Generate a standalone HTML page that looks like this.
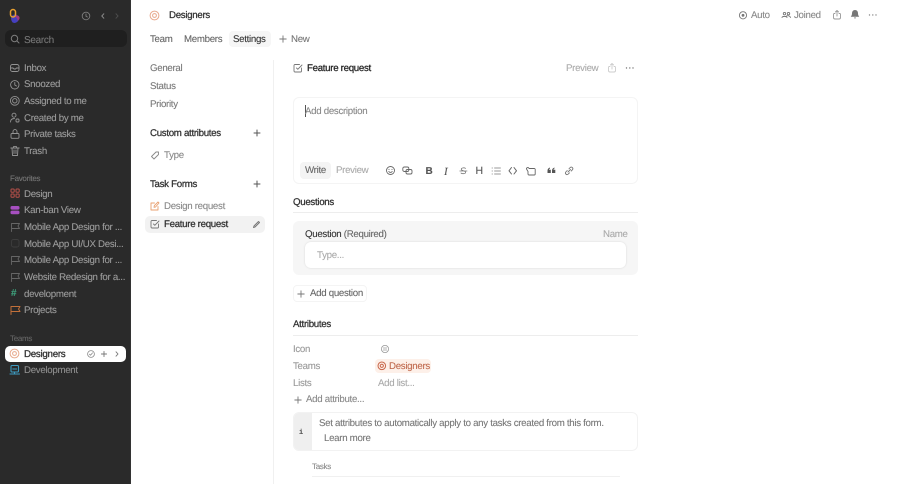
<!DOCTYPE html>
<html><head><meta charset="utf-8"><style>
*{box-sizing:border-box}
html,body{margin:0;padding:0;width:900px;height:484px;overflow:hidden;background:#fff;font-family:"Liberation Sans",sans-serif}
.t{position:absolute;white-space:nowrap;line-height:14px;font-size:9.7px;color:#777;margin-top:1px;letter-spacing:-.3px;text-rendering:geometricPrecision;-webkit-text-stroke:.1px}
.s{color:#aaa}
.d{color:#303030;-webkit-text-stroke:.25px}
.b{position:absolute}
svg{position:absolute;overflow:visible;fill:none;stroke-linecap:round;stroke-linejoin:round}
</style></head><body>
<div class="b" style="left:0;top:0;width:131px;height:484px;background:#2a2a2a;border-right:1px solid #333"></div>
<div class="b" style="left:5px;top:30px;width:122px;height:17px;border-radius:6px;background:#1f1f1f"></div>

<!-- logo -->
<svg style="left:8px;top:8px" width="14" height="16"><circle cx="7" cy="10.500" r="4" fill="#4a3fb0"/><circle cx="9" cy="10" r="2.600" fill="#a03a80"/><circle cx="6.500" cy="12" r="3" fill="#4540c0"/><rect x="2.500" y="1.500" width="5" height="7.500" rx="2.500" stroke="#e8a030" stroke-width="1.500"/></svg>
<!-- sidebar top icons -->
<svg style="left:81px;top:11px" width="10" height="10" stroke="#7c7c7c" stroke-width=".9"><circle cx="5" cy="5" r="3.800"/><path d="M5 3v2.200l1.400.8"/></svg>
<svg style="left:99px;top:12px" width="8" height="8" stroke="#8a8a8a" stroke-width="1"><path d="M4.800 1.800L2.800 4l2 2.200"/></svg>
<svg style="left:113px;top:12px" width="8" height="8" stroke="#4c4c4c" stroke-width="1"><path d="M3 1.800L5 4 3 6.200"/></svg>
<svg style="left:10px;top:34px" width="10" height="10" stroke="#7c7c7c" stroke-width="1"><circle cx="4.500" cy="4.500" r="3.200"/><path d="M7 7l2 2"/></svg>
<div class="t" style="left:24px;top:33px;color:#777;font-size:10px">Search</div>

<!-- nav icons -->
<svg style="left:9px;top:62px" width="12" height="12" stroke="#949494" stroke-width=".9"><rect x="1.500" y="2.500" width="8.500" height="7" rx="2"/><path d="M1.500 6h2.500l1 1h1.500l1-1h2.500"/></svg>
<svg style="left:9px;top:79px" width="12" height="12" stroke="#949494" stroke-width=".9"><circle cx="5.800" cy="5.800" r="4.200"/><path d="M5.800 3.400v2.600l1.700 1"/></svg>
<svg style="left:9px;top:95px" width="12" height="12" stroke="#949494" stroke-width=".9"><circle cx="5.800" cy="5.800" r="4.400"/><circle cx="5.800" cy="5.800" r="2.200"/></svg>
<svg style="left:9px;top:112px" width="12" height="12" stroke="#949494" stroke-width=".9"><circle cx="5" cy="3.200" r="2"/><path d="M1.500 10c0-2.500 1.500-3.500 4-3.500"/><rect x="7" y="7" width="3" height="3" rx="1"/></svg>
<svg style="left:9px;top:128px" width="12" height="12" stroke="#949494" stroke-width=".9"><rect x="2" y="5.500" width="8" height="4.800" rx="1"/><path d="M4 5.500V3.600a2 2 0 0 1 4 0v1.900"/></svg>
<svg style="left:9px;top:145px" width="12" height="12" stroke="#949494" stroke-width=".9"><path d="M1.800 3h8.400M4.500 3V1.600h3V3M3 3l.5 7.500h5L9 3M5 5v3.500M7 5v3.500"/></svg>

<div class="t" style="left:24px;top:60.500px;color:#9c9c9c">Inbox</div>
<div class="t" style="left:24px;top:77px;color:#9c9c9c">Snoozed</div>
<div class="t" style="left:24px;top:94px;color:#9c9c9c">Assigned to me</div>
<div class="t" style="left:24px;top:110.500px;color:#9c9c9c">Created by me</div>
<div class="t" style="left:24px;top:127px;color:#9c9c9c">Private tasks</div>
<div class="t" style="left:24px;top:144px;color:#9c9c9c">Trash</div>

<div class="t" style="left:10px;top:171px;font-size:8px;color:#777">Favorites</div>
<svg style="left:10px;top:188px" width="11" height="11" stroke="#b8504a" stroke-width="1"><rect x="1" y="1" width="3.200" height="3.200" rx=".8"/><rect x="6" y="1" width="3.200" height="3.200" rx=".8"/><rect x="1" y="6" width="3.200" height="3.200" rx=".8"/><rect x="6" y="6" width="3.200" height="3.200" rx=".8"/></svg>
<svg style="left:10px;top:205px" width="11" height="11"><rect x=".5" y="1" width="9" height="3.600" rx="1.600" fill="#a64fc0"/><rect x=".5" y="5.600" width="9" height="3.600" rx="1.600" fill="#a64fc0"/></svg>
<svg style="left:10px;top:222px" width="11" height="11" stroke="#666" stroke-width=".9"><path d="M1.500 9.500V1.500h8L8 4l1.500 2.500h-8"/></svg>
<svg style="left:10px;top:238px" width="11" height="11" stroke="#3d3d3d" stroke-width=".9"><rect x="1.500" y="1.500" width="7.500" height="7.500" rx="2"/></svg>
<svg style="left:10px;top:255px" width="11" height="11" stroke="#666" stroke-width=".9"><path d="M1.500 9.500V1.500h8L8 4l1.500 2.500h-8"/></svg>
<svg style="left:10px;top:272px" width="11" height="11" stroke="#666" stroke-width=".9"><path d="M1.500 9.500V1.500h8L8 4l1.500 2.500h-8"/></svg>
<div class="t" style="left:11px;top:286px;font-size:10px;font-weight:bold;color:#3fa07c">#</div>
<svg style="left:10px;top:305px" width="11" height="11" stroke="#c2703a" stroke-width="1"><path d="M1 9.500V1.500h9L8.500 4 10 6.500H1"/></svg>

<div class="t" style="left:24px;top:186.500px;color:#9c9c9c">Design</div>
<div class="t" style="left:24px;top:203px;color:#9c9c9c">Kan-ban View</div>
<div class="t" style="left:24px;top:220px;color:#9c9c9c">Mobile App Design for ...</div>
<div class="t" style="left:24px;top:236.500px;color:#9c9c9c">Mobile App UI/UX Desi...</div>
<div class="t" style="left:24px;top:253px;color:#9c9c9c">Mobile App Design for ...</div>
<div class="t" style="left:24px;top:270px;color:#9c9c9c">Website Redesign for a...</div>
<div class="t" style="left:24px;top:286.500px;color:#9c9c9c">development</div>
<div class="t" style="left:24px;top:303px;color:#9c9c9c">Projects</div>

<div class="t" style="left:10px;top:331px;font-size:8px;color:#666">Teams</div>
<div class="b" style="left:5px;top:346px;width:121px;height:16px;border-radius:5px;background:#fff"></div>
<svg style="left:9px;top:348px" width="12" height="12" stroke="#e8a98c" stroke-width="1"><circle cx="5.500" cy="5.500" r="4.400"/><circle cx="5.500" cy="5.500" r="1.900"/></svg>
<div class="t" style="left:24px;top:346.500px;color:#333;-webkit-text-stroke:.3px;font-size:9.800px;letter-spacing:-.3px">Designers</div>
<svg style="left:86px;top:349px" width="10" height="10" stroke="#888" stroke-width=".8"><circle cx="5" cy="5" r="3.400"/><path d="M3.500 5.200l1 1 2-2.300"/></svg>
<svg style="left:100px;top:350px" width="8" height="8" stroke="#777" stroke-width=".9"><path d="M4 1.400v5.200M1.400 4h5.200"/></svg>
<svg style="left:113px;top:350px" width="8" height="8" stroke="#777" stroke-width=".9"><path d="M3 1.800L5 4 3 6.200"/></svg>
<svg style="left:9px;top:364px" width="12" height="12" stroke="#3d9bc0" stroke-width="1.100"><rect x="2" y="1.500" width="7.500" height="6.500" rx="1"/><path d="M1 10h9.500M5.500 8v2M3.800 5h3.800"/></svg>
<div class="t" style="left:24px;top:363px;color:#8f8f8f">Development</div>

<!-- Header -->
<svg style="left:149px;top:10px" width="11" height="11" stroke="#e8a98c" stroke-width="1"><circle cx="5.500" cy="5.500" r="4.400"/><circle cx="5.500" cy="5.500" r="1.900"/></svg>
<div class="t d" style="left:169px;top:8px">Designers</div>
<div class="t" style="left:150px;top:32px;color:#666">Team</div>
<div class="t" style="left:184px;top:32px;color:#666">Members</div>
<div class="b" style="left:229px;top:31px;width:42px;height:16px;border-radius:4px;background:#f6f6f6"></div>
<div class="t" style="left:233px;top:32px;color:#333">Settings</div>
<svg style="left:279px;top:35px" width="8" height="8" stroke="#777" stroke-width=".9"><path d="M4 .8v6.400M.8 4h6.400"/></svg>
<div class="t" style="left:291px;top:32px;color:#777">New</div>

<svg style="left:738px;top:10px" width="10" height="10" stroke="#777" stroke-width=".9"><circle cx="5" cy="5.300" r="3.600"/><circle cx="5" cy="5.300" r="1" fill="#777"/></svg>
<div class="t" style="left:751px;top:8px;color:#888">Auto</div>
<svg style="left:781px;top:10px" width="11" height="10" stroke="#777" stroke-width=".9"><circle cx="3.500" cy="3.600" r="1.200"/><circle cx="7.500" cy="3.600" r="1.200"/><path d="M1 7.500c.3-1.500 4.700-1.500 5 0M5.500 6c1.200-.6 3.500-.3 4 1.500"/></svg>
<div class="t" style="left:794px;top:8px;color:#888">Joined</div>
<svg style="left:832px;top:9px" width="10" height="12" stroke="#999" stroke-width=".9"><path d="M3 4.500H2a1 1 0 0 0-.5 1v3a1.500 1.500 0 0 0 1.500 1.500h4a1.500 1.500 0 0 0 1.500-1.500v-3a1 1 0 0 0-.5-1H7M5 7V1.500M3.400 3L5 1.500 6.600 3"/></svg>
<svg style="left:850px;top:9px" width="10" height="11"><path d="M5 1c-2 0-3 1.500-3 3.500 0 1.800-.8 2.500-1.200 3.200h8.400C8.800 7 8 6.300 8 4.500 8 2.500 7 1 5 1zM4 8.500a1 1 0 0 0 2 0z" fill="#777"/></svg>
<svg style="left:868px;top:13px" width="10" height="4"><circle cx="1.500" cy="2" r=".7" fill="#888"/><circle cx="4.800" cy="2" r=".7" fill="#888"/><circle cx="8" cy="2" r=".7" fill="#888"/></svg>

<!-- secondary column -->
<div class="b" style="left:273px;top:60px;width:1px;height:424px;background:#f0f0f0"></div>
<div class="t" style="left:150px;top:61px;color:#777">General</div>
<div class="t" style="left:150px;top:79px;color:#777">Status</div>
<div class="t" style="left:150px;top:97px;color:#777">Priority</div>
<div class="t d" style="left:150px;top:126px">Custom attributes</div>
<svg style="left:253px;top:129px" width="8" height="8" stroke="#555" stroke-width="1"><path d="M4 1v6M1 4h6"/></svg>
<svg style="left:150px;top:150px" width="10" height="10" stroke="#888" stroke-width=".9"><path d="M1.500 6.500L6 2h2.500v2.500L4 9z"/></svg>
<div class="t" style="left:164px;top:148px;color:#888">Type</div>
<div class="t d" style="left:150px;top:177px">Task Forms</div>
<svg style="left:253px;top:180px" width="8" height="8" stroke="#555" stroke-width="1"><path d="M4 1v6M1 4h6"/></svg>
<svg style="left:150px;top:201px" width="10" height="10" stroke="#e8a070" stroke-width=".9"><path d="M8 5.500V9H1V2h3.500M4 6.300l.3-1.600L8 1l1 1-3.500 4z"/></svg>
<div class="t" style="left:164px;top:199px;color:#888">Design request</div>
<div class="b" style="left:145px;top:216px;width:120px;height:17px;border-radius:5px;background:#f2f2f2"></div>
<svg style="left:150px;top:219px" width="10" height="10" stroke="#777" stroke-width=".9"><path d="M8.500 5v3a1 1 0 0 1-1 1H2a1 1 0 0 1-1-1V2.500a1 1 0 0 1 1-1h4.500M3.500 5l1.300 1.300L9 2"/></svg>
<div class="t d" style="left:164px;top:217px">Feature request</div>
<svg style="left:252px;top:220px" width="9" height="9" stroke="#777" stroke-width="1"><path d="M1.500 7.500l.5-1.500L6.500 1.500l1 1L3 7z"/></svg>

<!-- main -->
<svg style="left:293px;top:63px" width="10" height="10" stroke="#777" stroke-width=".9"><path d="M8.500 5v3a1 1 0 0 1-1 1H2a1 1 0 0 1-1-1V2.500a1 1 0 0 1 1-1h4.500M3.500 5l1.300 1.300L9 2"/></svg>
<div class="t d" style="left:307px;top:60.500px;color:#222">Feature request</div>
<div class="t s" style="left:566px;top:60.500px">Preview</div>
<svg style="left:607px;top:62px" width="10" height="12" stroke="#ccc" stroke-width=".9"><path d="M3 4.500H2a1 1 0 0 0-.5 1v3a1.500 1.500 0 0 0 1.500 1.500h4a1.500 1.500 0 0 0 1.500-1.500v-3a1 1 0 0 0-.5-1H7M5 7V1.500M3.400 3L5 1.500 6.600 3"/></svg>
<svg style="left:625px;top:66px" width="10" height="4"><circle cx="1.500" cy="2" r=".7" fill="#777"/><circle cx="4.800" cy="2" r=".7" fill="#777"/><circle cx="8" cy="2" r=".7" fill="#777"/></svg>

<div class="b" style="left:293px;top:97px;width:345px;height:87px;border:1px solid #f4f4f4;border-radius:6px"></div>
<div class="b" style="left:305px;top:105px;width:1px;height:12px;background:#555"></div>
<div class="t" style="left:305px;top:104px;color:#888">Add description</div>
<div class="b" style="left:300px;top:162px;width:31px;height:17px;border-radius:4px;background:#f4f4f4"></div>
<div class="t" style="left:305px;top:163px;color:#666">Write</div>
<div class="t" style="left:336px;top:163px;color:#aaa">Preview</div>
<svg style="left:386px;top:166px" width="10" height="10" stroke="#666" stroke-width=".9"><circle cx="4.500" cy="4.500" r="4"/><path d="M2.800 5.500c.8 1.200 2.600 1.200 3.400 0M3 3.300v.3M6 3.300v.3"/></svg>
<svg style="left:402px;top:166px" width="11" height="10" stroke="#666" stroke-width=".9"><rect x=".8" y="1" width="6" height="4.500" rx="1.500"/><rect x="4" y="3.500" width="6" height="4.500" rx="1.500"/></svg>
<div class="t" style="left:425.500px;top:164px;font-weight:bold;color:#555;font-size:10px">B</div>
<div class="t" style="left:444px;top:164px;font-family:'Liberation Serif',serif;font-style:italic;color:#555;font-size:11px">I</div>
<svg style="left:459px;top:166px" width="9" height="10" stroke="#777" stroke-width=".8"><path d="M6.500 2.500C6 1.500 2 1.500 2.300 3.500c.3 1.500 4.500 1 4.300 3C6.400 8 2.600 8 2 7M.8 5h7.200"/></svg>
<div class="t" style="left:475.500px;top:163px;color:#555;font-size:10.500px">H</div>
<svg style="left:491px;top:166px" width="10" height="10" stroke="#777" stroke-width=".8"><path d="M3.500 2h6M3.500 5h6M3.500 8h6M1 2h.5M1 5h.5M1 8h.5"/></svg>
<svg style="left:508px;top:166px" width="10" height="10" stroke="#666" stroke-width="1"><path d="M3.500 1.500L1 4.800l2.500 3.200M6 1.500l2.500 3.300L6 8"/></svg>
<svg style="left:526px;top:166px" width="10" height="10" stroke="#666" stroke-width=".9"><path d="M3 2.500h5.500a1 1 0 0 1 .7.7v4.800a1 1 0 0 1-1 1H3a1 1 0 0 1-1-1V5.500L.8 3.500a1.100 1.100 0 0 1 2-1.500z"/></svg>
<svg style="left:547px;top:167px" width="9" height="8"><path d="M.5 3.500c0-1.500 1-2.500 2.500-3v1c-.6.300-1 .7-1 1.200h1.800v3.300H.5zM5 3.500c0-1.500 1-2.500 2.500-3v1c-.6.300-1 .7-1 1.200h1.800v3.300H5z" fill="#555"/></svg>
<svg style="left:564px;top:166px" width="10" height="10" stroke="#777" stroke-width=".9"><path d="M4 6l2.500-2.500M3.200 4.500L1.800 6a1.600 1.600 0 0 0 2.300 2.200l1.400-1.400M5 2.800L6.200 1.500A1.600 1.600 0 0 1 8.500 3.700L7.200 5"/></svg>

<div class="t d" style="left:293px;top:195px">Questions</div>
<div class="b" style="left:293px;top:212px;width:345px;height:1px;background:#ededed"></div>
<div class="b" style="left:293px;top:221px;width:345px;height:54px;border-radius:6px;background:#f6f6f6"></div>
<div class="t" style="left:305px;top:227px;color:#333">Question <span style="color:#666">(Required)</span></div>
<div class="t s" style="left:603px;top:227px">Name</div>
<div class="b" style="left:305px;top:242px;width:321px;height:26px;border-radius:6px;background:#fff;box-shadow:0 0 2px rgba(0,0,0,.12)"></div>
<div class="t s" style="left:317px;top:248px">Type...</div>
<div class="b" style="left:293px;top:285px;width:74px;height:17px;border:1px solid #f4f4f4;border-radius:4px"></div>
<svg style="left:297px;top:290px" width="8" height="8" stroke="#777" stroke-width=".9"><path d="M4 .8v6.400M.8 4h6.400"/></svg>
<div class="t" style="left:310px;top:286px;color:#666">Add question</div>
<div class="t d" style="left:293px;top:317px">Attributes</div>
<div class="b" style="left:293px;top:335px;width:345px;height:1px;background:#ededed"></div>

<div class="t" style="left:293px;top:342px;color:#999">Icon</div>
<svg style="left:380px;top:344px" width="10" height="10" stroke="#999" stroke-width=".8"><circle cx="5" cy="5" r="3.600"/><path d="M3.300 4h3.400M3.300 6h3.400"/></svg>
<div class="t" style="left:293px;top:359px;color:#999">Teams</div>
<div class="b" style="left:375px;top:359px;width:56px;height:14px;border-radius:4px;background:#fdf0e9"></div>
<svg style="left:377px;top:361px" width="10" height="10" stroke="#c8664a" stroke-width="1"><circle cx="4.800" cy="4.800" r="3.800"/><circle cx="4.800" cy="4.800" r="1.600"/></svg>
<div class="t" style="left:389px;top:359px;color:#c06a4e">Designers</div>
<div class="t" style="left:293px;top:376px;color:#999">Lists</div>
<div class="t" style="left:378px;top:376px;color:#aaa">Add list...</div>
<svg style="left:294px;top:396px" width="8" height="8" stroke="#777" stroke-width=".9"><path d="M4 .8v6.400M.8 4h6.400"/></svg>
<div class="t" style="left:306px;top:392px;color:#888">Add attribute...</div>

<div class="b" style="left:293px;top:412px;width:345px;height:39px;border:1px solid #f2f2f2;border-radius:6px;overflow:hidden"><div style="width:18px;height:100%;background:#efefef"></div></div>
<div class="t" style="left:299px;top:425px;font-size:7px;font-weight:bold;color:#555;font-family:'Liberation Mono',monospace">i</div>
<div class="t" style="left:319px;top:416px;color:#777">Set attributes to automatically apply to any tasks created from this form.</div>
<div class="t" style="left:324px;top:431px;color:#777">Learn more</div>
<div class="t" style="left:312px;top:459px;font-size:8px;color:#888">Tasks</div>
<div class="b" style="left:312px;top:476px;width:308px;height:1px;background:#f0f0f0"></div>
</body></html>
